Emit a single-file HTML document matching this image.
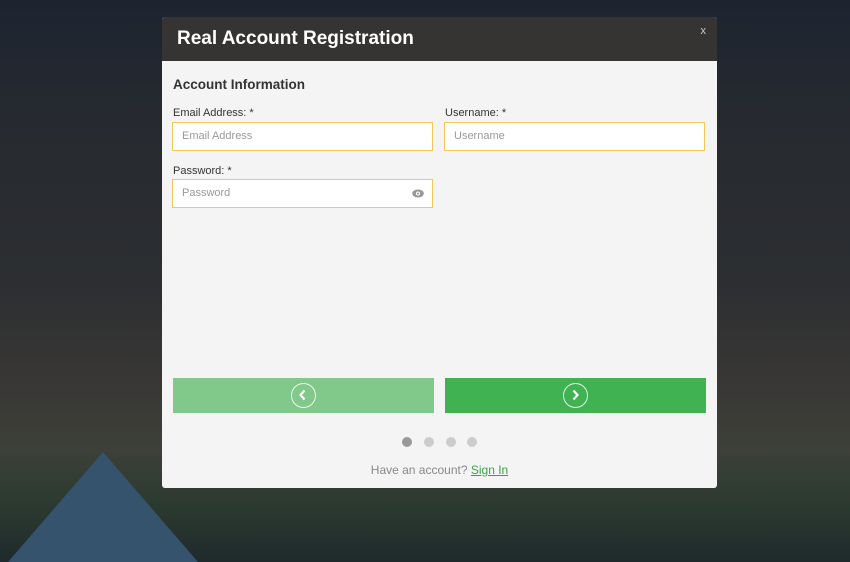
<!DOCTYPE html>
<html><head><style>
html,body{margin:0;padding:0;width:850px;height:562px;overflow:hidden;font-family:"Liberation Sans",Arial,sans-serif}
body{background:linear-gradient(180deg,#1c2430 0%,#262a30 20%,#2c2e31 50%,#3a3836 70%,#3c4038 80%,#2b3a30 90%,#1f2a2c 100%);position:relative}
.pyr{position:absolute;top:452px;width:0;height:0;border-left:95px solid transparent;border-right:95px solid transparent;border-bottom:110px solid #35536c;left:8px}
.modal{position:absolute;left:162px;top:17px;width:555px;height:471px;background:#f4f4f4;border-radius:3px;overflow:hidden}
.hd{height:44px;background:#353432;position:relative}
.hd h1{margin:0;position:absolute;left:15px;top:11px;font-size:19px;color:#fff;font-weight:bold}
.hd .x{position:absolute;right:11px;top:8px;color:#ccc;font-size:11px}
h2{position:absolute;left:11px;top:60px;margin:0;font-size:13.5px;color:#333;font-weight:bold}
.lb{position:absolute;font-size:11px;color:#333}
.in{position:absolute;height:29px;width:261px;box-sizing:border-box;border:1px solid #f1c95a;background:#fff;font-size:11px;color:#999;line-height:27px;padding-left:9px}
.btn{position:absolute;top:361px;width:261px;height:35px}
.c{position:absolute;left:118px;top:5px;width:25px;height:25px;border:1.5px solid rgba(255,255,255,.85);border-radius:50%;box-sizing:border-box}
.dot{position:absolute;top:420px;width:10px;height:10px;border-radius:50%;background:#ccc}
</style></head><body>
<div class="pyr"></div>
<div class="modal">
<div class="hd"><h1>Real Account Registration</h1><span class="x">x</span></div>
<h2>Account Information</h2>
<div class="lb" style="left:11px;top:90px">Email Address: *</div>
<div class="lb" style="left:283px;top:90px">Username: *</div>
<div class="in" style="left:10px;top:105px">Email Address</div>
<div class="in" style="left:282px;top:105px">Username</div>
<div class="lb" style="left:11px;top:148px">Password: *</div>
<div class="in" style="left:10px;top:162px">Password<svg style="position:absolute;right:8px;top:9px" width="12" height="9" viewBox="0 0 12 9"><ellipse cx="6" cy="4.5" rx="5.8" ry="4" fill="#999"/><circle cx="6" cy="4.5" r="2" fill="#fff"/><circle cx="6" cy="4.5" r="1" fill="#999"/></svg></div>
<div class="btn" style="left:11px;background:#80c98a"><div class="c"><svg width="22" height="22" viewBox="0 0 22 22"><path d="M12.5 6.5 L8.5 11 L12.5 15.5" stroke="#fff" stroke-width="2.2" fill="none"/></svg></div></div>
<div class="btn" style="left:283px;background:#40b252"><div class="c"><svg width="22" height="22" viewBox="0 0 22 22"><path d="M9.5 6.5 L13.5 11 L9.5 15.5" stroke="#fff" stroke-width="2.2" fill="none"/></svg></div></div>
<div class="dot" style="left:240px;background:#999"></div>
<div class="dot" style="left:262px"></div>
<div class="dot" style="left:284px"></div>
<div class="dot" style="left:305px"></div>
<div style="position:absolute;top:446px;left:0;width:555px;text-align:center;font-size:12px;color:#888">Have an account? <span style="color:#3aa34a;text-decoration:underline">Sign In</span></div>
</div>
</body></html>
